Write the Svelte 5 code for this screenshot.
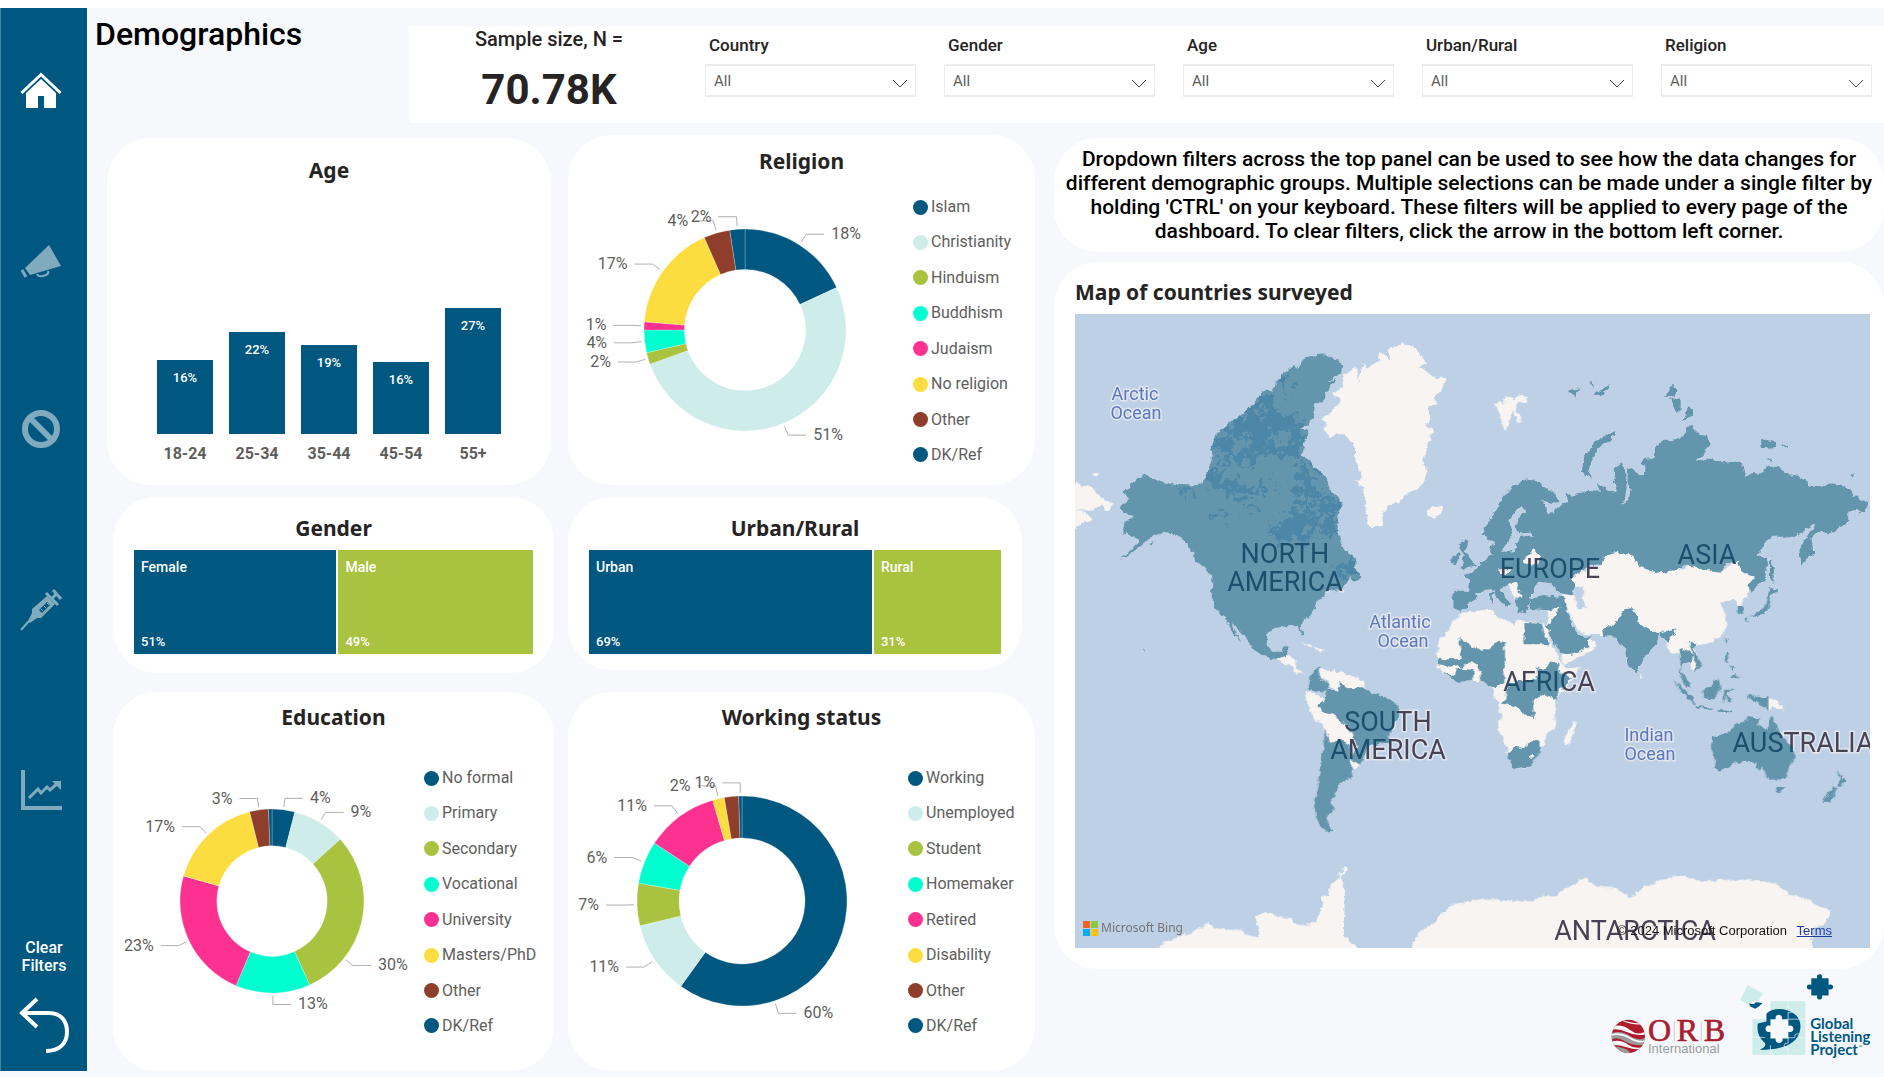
<script lang="ts">
	type Slice = { name: string; share: number; color: string; label?: string; labelAt?: number };

	const palette = ['#00577f', '#cdecea', '#a9c23f', '#00ffcf', '#fd3190', '#fcdd3f', '#8e3e2b', '#00577f'];

	const filters = [
		{ id: 'country', label: 'Country', options: ['All'] },
		{ id: 'gender', label: 'Gender', options: ['All', 'Female', 'Male'] },
		{ id: 'age', label: 'Age', options: ['All', '18-24', '25-34', '35-44', '45-54', '55+'] },
		{ id: 'area', label: 'Urban/Rural', options: ['All', 'Urban', 'Rural'] },
		{ id: 'religion', label: 'Religion', options: ['All', 'Islam', 'Christianity', 'Hinduism', 'Buddhism'] }
	];

	const ages = [
		{ name: '18-24', share: 15.9, label: '16%' },
		{ name: '25-34', share: 21.9, label: '22%' },
		{ name: '35-44', share: 19, label: '19%' },
		{ name: '45-54', share: 15.5, label: '16%' },
		{ name: '55+', share: 27, label: '27%' }
	];

	// labelAt moves a label off the middle of its slice, clear of the legend
	function toSlices(rows: Array<[string, number, string?, number?]>): Slice[] {
		return rows.map(([name, share, label, labelAt], i) => ({ name, share, label, labelAt, color: palette[i] }));
	}

	const religion = toSlices([
		['Islam', 18.1, '18%'],
		['Christianity', 51.4, '51%'],
		['Hinduism', 1.9, '2%'],
		['Buddhism', 3.6, '4%'],
		['Judaism', 1.3, '1%'],
		['No religion', 17.1, '17%'],
		['Other', 4.2, '4%'],
		['DK/Ref', 2.4, '2%']
	]);

	const education = toSlices([
		['No formal', 4, '4%'],
		['Primary', 9.3, '9%'],
		['Secondary', 30, '30%', 35.7],
		['Vocational', 13.1, '13%'],
		['University', 23, '23%'],
		['Masters/PhD', 16.7, '17%'],
		['Other', 3.3, '3%'],
		['DK/Ref', 0.6]
	]);

	const working = toSlices([
		['Working', 59.9, '60%', 45],
		['Unemployed', 11.3, '11%'],
		['Student', 6.5, '7%'],
		['Homemaker', 6.6, '6%'],
		['Retired', 11.2, '11%'],
		['Disability', 1.8, '2%'],
		['Other', 2.2],
		['DK/Ref', 0.5, '1%']
	]);

	function buildArcs(slices: Slice[], cx: number, cy: number, r: number) {
		const point = (share: number, radius: number) => {
			const a = (share / 100) * Math.PI * 2;
			return [cx + Math.sin(a) * radius, cy - Math.cos(a) * radius];
		};
		const inner = r * 0.6;
		let start = 0;
		return slices.map((slice) => {
			const end = start + slice.share;
			const mid = slice.labelAt ?? (start + end) / 2;
			const large = slice.share > 50 ? 1 : 0;
			const d = `M${point(start, r)}A${r} ${r} 0 ${large} 1 ${point(end, r)}L${point(end, inner)}A${inner} ${inner} 0 ${large} 0 ${point(start, inner)}Z`;
			const elbow = point(mid, r * 1.125);
			const side = mid < 50 ? 1 : -1;
			start = end;
			return {
				...slice,
				d,
				leader: `M${point(mid, r * 1.03)}L${elbow}h${side * 18}`,
				x: elbow[0] + side * 25,
				y: elbow[1] + 5,
				anchor: side > 0 ? 'start' : 'end'
			};
		});
	}

	// Each region keeps its own origin; three units to one pixel of the map.
	const regions = [
		{
			transform: 'translate(-45 -42)',
			land: [
				'M1030 132L1060 140 1085 165 1100 190 1080 200 1095 210 1125 235 1160 232 1150 260 1130 280 1125 310 1105 320 1110 360 1098 375 1120 390 1105 440 1090 480 1100 520 1085 560 1035 585 1015 610 980 620 970 640 965 680 930 682 918 650 915 600 905 530 885 470 885 440 862 415 830 400 810 415 790 385 800 370 782 355 820 335 840 300 815 280 850 260 845 230 890 200 898 245 908 190 922 205 960 180 955 155 990 175 985 145Z',
				'M1100 632L1120 618 1148 622 1140 640 1122 652 1102 645Z',
				'M45 548L95 560 130 600 158 612 145 632 120 618 95 632 45 630 20 600Z',
				'M45 632L75 635 95 660 65 672 45 688 20 660Z',
				'M95 522l18-4-3 12z',
				'M892 540l18-5-2 24-14-4z',
				'M728 1028l30 12-6 6zM760 1040l34 10-14 6z'
			],
			surveyed: [
				'M250 524L292 541 350 555 395 556 428 549 440 520 455 480 453 450 465 408 490 383 500 378 540 342 550 345 617 266 640 275 645 245 668 225 700 195 712 208 722 190 735 172 770 165 795 163 830 178 850 200 840 218 805 245 830 238 800 275 790 300 765 315 762 345 745 375 722 385 745 390 740 420 728 430 735 440 725 470 750 478 760 500 800 530 810 570 848 607 835 650 832 700 850 745 885 775 888 810 905 835 880 842 870 830 850 865 800 875 790 895 770 905 760 935 725 968 722 975 732 1010 722 1000 715 975 690 978 640 985 622 1000 620 1035 635 1055 665 1055 670 1040 690 1038 680 1065 650 1078 610 1068 575 1045 568 1030 530 985 512 962 525 990 545 1025 520 1000 498 955 475 935 455 895 457 830 435 805 405 780 400 760 370 715 345 700 315 697 280 708 262 722 235 745 205 765 175 778 205 755 240 725 235 718 190 700 190 675 205 655 222 655 190 635 180 620 210 600 190 575 210 565 215 545Z',
				'M1205 718L1222 725 1215 755 1235 780 1245 795 1210 808 1200 805 1215 790 1205 775 1212 765 1198 745Z',
				'M1178 770L1195 755 1198 780 1185 795 1172 792Z',
				'M265 730l12-8-5 14z',
				'M248 1040l10 8-3 6z'
			],
			lakes: [
				'M617 266L640 290 635 330 660 350 700 340 725 385 725 430 720 480 680 475 650 460 600 470 540 490 500 470 490 455 455 460 465 408 500 378 550 345Z',
				'M650 725L640 700 650 670 690 650 690 620 720 645 720 600 700 560 720 530 725 480 760 530 770 590 800 580 848 607 835 640 832 700 800 710 780 680 745 670 745 725Z',
				'M440 520L455 500 490 480 500 500 470 530 540 560 630 560 640 580 520 585 450 560 430 549Z',
				'M365 558l30 0-5 40zM740 500l30 20 0 60-20-30zM820 800l70-30 20 60-50 10z',
				'M600 480l30 60 15 0-10-60zM450 620l40 10 5 25-25-15zM560 590l20 30-10 30zM660 250l20 30 10-10-15-40z'
			],
			islets: [
				'M500 400l40 20 25-15 0 40-45 5zM640 400l50-10-10 40-60 10zM580 340l30-20 10 30zM600 470l60 0 20 60-60 10z',
				'M665 470l12 0 2 50-14-10zM690 470l30 10-5 30-20 0z',
				'M735 600l20-10 10 40-30 10zM770 620l30 5-10 40-20-10z'
			]
		},
		{
			transform: 'translate(1155 -42)',
			land: [
				'M335 835L355 820 425 795 430 770 475 755 520 770 545 800 590 818 650 810 690 800 785 815 830 780 845 820 885 830 865 880 845 905 850 925 835 915 825 900 780 905 795 940 800 980 790 1000 760 1025 720 1035 700 1035 715 1075 718 1100 700 1112 690 1100 685 1050 640 1065 625 1040 600 1000 430 1005 400 1005 365 1000 345 975 330 940 320 925 305 880 345 890 350 925 380 925 368 890 372 858 345 860Z',
				'M385 1015L408 1025 400 1050 350 1075 310 1095 305 1068 350 1060 390 1040Z',
				'M265 930L300 922 285 950 262 985Z',
				'M185 790L200 770 220 748 240 770 235 795Z',
				'M145 855L168 848 182 890 165 895Z',
				'M115 808l40 0-10 14-28 0zM210 835l12 15-8 4z',
				'M105 310L120 302 128 312 140 290 160 298 178 286 205 292 200 312 172 308 165 325 180 350 185 370 170 365 160 330 150 345 140 395 125 365 118 335Z'
			],
			surveyed: [
				'M200 535L225 540 250 560 290 585 295 605 275 612 245 600 265 625 262 640 280 640 290 625 305 612 325 605 315 575 335 590 350 582 380 572 420 575 410 550 465 578 470 570 458 545 465 505 485 490 495 510 500 560 495 600 480 612 505 600 512 570 502 540 505 500 525 518 545 530 560 510 545 490 550 478 585 472 585 445 610 425 670 412 680 380 700 378 705 400 745 405 752 430 735 455 710 485 760 475 785 490 820 485 845 485 855 530 880 520 910 520 920 500 950 500 990 525 1035 535 1045 555 1095 560 1115 550 1160 560 1200 600 1225 605 1218 640 1190 630 1165 635 1165 665 1110 700 1075 695 1055 715 1060 760 1025 800 1018 750 1045 705 1070 668 1040 685 1005 710 935 710 890 765 925 775 920 810 905 850 870 875 865 855 885 830 845 820 830 785 800 790 785 815 740 810 690 800 670 795 650 810 590 818 540 800 520 770 475 755 430 770 425 795 380 800 355 820 335 835 345 860 335 885 305 880 280 860 275 850 235 845 220 875 210 890 205 925 195 940 175 935 165 905 182 890 168 848 145 855 120 865 130 885 155 910 135 920 100 880 95 868 70 870 45 878 50 895 30 905 20 925 0 932-20 925-20 872 28 872 30 840 10 825 40 815 60 790 80 775 95 765 88 745 105 730 85 722 70 690 90 660 130 590 160 560ZM185 622L168 635 148 665 155 700 145 720 125 758 165 752 172 725 185 710 218 705 215 698 178 700 168 680 172 655 195 635ZM185 790L235 795 240 770 220 748 200 770ZM115 808l40 0-10 14-28 0z',
				'M208 895L250 885 315 892 320 920 270 928 210 925Z',
				'M300 925L315 918 330 950 340 980 365 1010 390 1010 385 1040 350 1060 312 1068 290 1040 258 980 280 955Z',
				'M425 985L455 980 480 950 490 928 515 925 530 945 540 975 595 1000 595 1030 545 1080 540 1100 527 1123 505 1090 495 1040 475 1030 470 1010 430 1008Z',
				'M595 1000L648 985 640 1005 622 1028 605 1010Z',
				'M465 393L470 405 420 440 395 480 385 515 398 538 365 515 372 475 400 430Z',
				'M640 248L652 275 640 292 615 290Z',
				'M630 300L662 295 662 335 645 330Z',
				'M685 318L700 345 665 362Z',
				'M322 275l35-12-10 25zM400 285l25-15 20-18 3 12-20 18-25 8zM385 245l10-2 5 22z',
				'M903 418L950 425 945 445 905 448ZM960 432l25 8-3 8zM922 478l14-6 5 10z',
				'M1168 522l18 2-8 8z',
				'M930 768L942 810 940 855 930 830Z',
				'M930 862l24 10-18 12-10-4z',
				'M90 880l8-2 0 28-7 2z'
			],
			lakes: [],
			islets: []
		},
		{
			transform: 'translate(555 858)',
			land: [
				'M597 40L700 27 705 45 765 75 768 60 855 68 870 120 905 190 920 205 960 205 935 240 900 280 885 300 888 380 858 400 858 430 840 445 820 480 800 500 760 508 745 470 730 420 712 385 722 350 715 310 700 285 695 255 665 240 640 240 590 245 550 220 535 205 530 175 540 120 590 55Z',
				'M945 362L950 375 930 435 915 430 915 405Z',
				'M135 275L165 280 200 300 180 335 225 345 270 390 290 440 270 435 210 425 198 388 160 350 140 310Z',
				'M180 205L240 215 310 240 312 262 265 265 220 270 205 245 180 230Z',
				'M272 478l28 15-10 15-20-3Z',
				'M55 180L72 160 110 180 105 200 128 222 112 220 92 200Z'
			],
			surveyed: [
				'M597 113L660 150 685 148 712 125 735 130 735 175 730 220 730 250 697 262 665 242 655 200 635 180 605 205 590 195 570 200 535 195 530 172 550 178 605 177Z',
				'M552 215L585 225 590 205 640 210 640 240 590 247Z',
				'M793 66L845 68 850 90 867 133 793 133Z',
				'M745 255L780 240 800 245 835 225 830 200 850 210 870 185 895 190 900 215 935 235 895 275 890 300 850 285 820 295 825 355 800 350 770 320 720 310 735 300Z',
				'M742 465L765 440 790 445 820 420 838 425 840 455 815 495 760 508ZM808 470l8-6 8 6-8 8z',
				'M185 198L175 210 180 235 210 255 200 275 185 280 140 268 152 225 165 205Z',
				'M200 270L235 270 240 250 265 265 310 262 325 275 380 292 415 315 415 340 390 400 385 425 325 440 300 495 270 475 292 440 268 390 225 345 180 335 175 315 195 300Z',
				'M195 390L210 425 245 420 270 435 275 510 278 530 245 545 230 575 212 605 220 625 205 650 205 680 222 692 200 695 170 660 162 620 175 560 185 480 192 420Z'
			],
			lakes: [],
			islets: []
		},
		{
			transform: 'translate(1455 828)',
			land: ['M625 325L650 330 672 362 640 350 626 362Z', 'M243 250l6 10-5 4z'],
			surveyed: [
				'M355 180L375 178 400 195 395 215 370 220 360 240 385 270 395 298 375 285 358 250 362 205Z',
				'M385 160L412 158 400 180 425 215 420 235 400 250 412 225 395 185Z',
				'M338 270L370 295 400 320 405 342 380 325Z',
				'M402 345L458 355 455 361 405 352ZM470 360l50 2-2 5-45-2z',
				'M425 298L450 290 475 262 482 290 465 328 430 325Z',
				'M488 300L525 298 500 308 514 335 504 340 498 318 492 340Z',
				'M562 310L590 320 625 318 625 362 600 345 575 330Z',
				'M495 190L506 186 508 215 500 220ZM508 225l18 8-4 12zM510 262l20-14 2 22z',
				'M495 145l8-2-4 18z',
				'M625 0L650 3 632 15 630 50 610 72 565 80 562 95 554 85 600 65 620 40Z',
				'M535 45L550 45 552 70 533 76Z',
				'M567 382L598 385 590 405 625 420 633 375 645 400 660 430 680 450 702 480 704 505 685 545 680 565 655 572 620 565 608 530 598 540 590 520 560 515 525 520 500 532 475 542 462 535 465 510 452 470 455 445 500 430 530 400 550 395Z',
				'M648 588l22 0-5 20-10 2z',
				'M827 538L845 560 860 565 845 590 835 590 842 570Z',
				'M825 588L832 595 810 635 788 636 795 620Z'
			],
			lakes: [],
			islets: []
		},
		{
			transform: 'translate(-45 978) scale(1.577 1)',
			land: [
				'M175 950L200 905 230 890 255 875 280 852 300 862 345 870 360 890 380 890 372 830 390 817 435 835 465 860 485 845 500 800 498 765 512 770 515 735 535 708 542 750 540 885 585 950Z',
				'M528 705l18-26 4 4-14 26z',
				'M660 950L685 870 710 850 740 800 790 778 900 784 920 765 945 772 960 745 1000 712 1020 740 1060 745 1085 775 1110 740 1140 722 1175 706 1230 724 1310 715 1360 730 1390 765 1420 775 1465 815 1455 850 1430 870 1433 950Z'
			],
			surveyed: [],
			lakes: [],
			islets: []
		}
	];

	const continents = [
		{ text: 'NORTH', x: 210, y: 249 },
		{ text: 'AMERICA', x: 210, y: 277 },
		{ text: 'SOUTH', x: 313, y: 417 },
		{ text: 'AMERICA', x: 313, y: 445 },
		{ text: 'EUROPE', x: 475, y: 264 },
		{ text: 'ASIA', x: 632, y: 250 },
		{ text: 'AFRICA', x: 474, y: 377 },
		{ text: 'AUSTRALIA', x: 728, y: 438 },
		{ text: 'ANTARCTICA', x: 560, y: 626 }
	];

	const oceans = [
		{ text: 'Arctic', x: 60, y: 86 },
		{ text: 'Ocean', x: 61, y: 105 },
		{ text: 'Atlantic', x: 325, y: 314 },
		{ text: 'Ocean', x: 328, y: 333 },
		{ text: 'Indian', x: 574, y: 427 },
		{ text: 'Ocean', x: 575, y: 446 }
	];
</script>

{#snippet donut(title: string, slices: Slice[], width: number, cx: number, cy: number, r: number)}
	<svg class="donut" {width} height="300" viewBox="0 0 {width} 300" role="img" aria-label={title}>
		{#each buildArcs(slices, cx, cy, r) as arc}
			<path d={arc.d} fill={arc.color} class="arc" />
			{#if arc.label}
				<path d={arc.leader} class="leader" />
				<text x={arc.x} y={arc.y} text-anchor={arc.anchor}>{arc.label}</text>
			{/if}
		{/each}
	</svg>
	<ul class="legend">
		{#each slices as slice}
			<li><span class="dot" style="background: {slice.color}"></span>{slice.name}</li>
		{/each}
	</ul>
{/snippet}

<div class="page">
	<nav class="sidebar" aria-label="Pages">
		<div class="pages">
			<a href="#home" class="current" aria-label="Home">
				<svg width="42" height="36" viewBox="0 0 42 36">
					<path d="M1.500 21 21 2.500 40.500 21" fill="none" stroke="currentColor" stroke-width="3" />
					<path d="M21 7 36 21V36H24V24H18V36H6V21Z" fill="currentColor" />
				</svg>
			</a>
			<a href="#voices" aria-label="Voices">
				<svg width="40" height="33" viewBox="0 0 40 33">
					<path d="M28 0 40 21 9 30 4 23Z" fill="currentColor" />
					<path d="M1 25 5 32" fill="none" stroke="currentColor" stroke-width="3" />
					<path d="M16 29q1 3 6 2l3-1q3-1 2-4" fill="none" stroke="currentColor" stroke-width="2" />
				</svg>
			</a>
			<a href="#barriers" aria-label="Barriers">
				<svg width="38" height="38" viewBox="0 0 38 38" fill="none" stroke="currentColor">
					<circle cx="19" cy="19" r="16" stroke-width="6" />
					<path d="M8 8 30 30" stroke-width="6" />
				</svg>
			</a>
			<a href="#vaccines" aria-label="Vaccines">
				<svg width="42" height="42" viewBox="0 0 42 42">
					<path d="M1 41 9 32" stroke="currentColor" stroke-width="2" />
					<path d="M8 32 12 24 12 20 27 7 35 15 21 29 17 29 10 34Z" fill="currentColor" />
					<path d="M26 4 38 16M31 11 36 5M33 1 41 10" stroke="currentColor" stroke-width="3" />
					<path d="M19 21 27 13 30 16 22 24Z" fill="#00577f" />
					<path d="M21 20l2 2M24 17l2 2M27 14l2 2" stroke="currentColor" stroke-width="1" />
				</svg>
			</a>
			<a href="#trends" aria-label="Trends">
				<svg width="41" height="40" viewBox="0 0 41 40" fill="none" stroke="currentColor">
					<path d="M2 0V38H41" stroke-width="4" />
					<path d="M8 28 17 19 20 23 26 17 29 20 37 13" stroke-width="3" />
					<path d="M31 11H40V20Z" fill="currentColor" stroke="none" />
				</svg>
			</a>
		</div>
		<button type="button" class="clear">
			<span>Clear<br />Filters</span>
			<svg width="50" height="56" viewBox="0 0 50 56" fill="none" stroke="#fff" stroke-width="4">
				<path d="M18 2 3 16 18 30" />
				<path d="M3 16H30C42 16 48 24 48 35S41 54 27 54" />
			</svg>
		</button>
	</nav>

	<main>
		<header>
			<h1>Demographics</h1>
			<div class="panel">
				<div class="kpi">
					<span class="kpi-label">Sample size, N =</span>
					<strong>70.78K</strong>
				</div>
				{#each filters as filter}
					<div class="filter">
						<label for={filter.id}>{filter.label}</label>
						<div class="select-box">
							<select id={filter.id}>
								{#each filter.options as option}
									<option>{option}</option>
								{/each}
							</select>
							<svg width="16" height="10" viewBox="0 0 16 10">
								<path d="M1 1 8 8 15 1" fill="none" stroke="#444" />
							</svg>
						</div>
					</div>
				{/each}
			</div>
		</header>

		<div class="columns">
			<div class="column first">
				<section class="card age">
					<h2>Age</h2>
					<div class="bars">
						{#each ages as age}
							<div class="bar-group">
								<div class="bar" style="height: {Math.round(age.share * 4.66)}px">{age.label}</div>
								<span>{age.name}</span>
							</div>
						{/each}
					</div>
				</section>
				<section class="card split">
					<h2>Gender</h2>
					<div class="treemap">
						<div class="tile blue" style="flex-basis: 51%"><span>Female</span><span class="share">51%</span></div>
						<div class="tile green" style="flex-basis: 49%"><span>Male</span><span class="share">49%</span></div>
					</div>
				</section>
				<section class="card tall">
					<h2>Education</h2>
					<div class="chart">{@render donut('Education', education, 311, 159, 169, 92)}</div>
				</section>
			</div>

			<div class="column second">
				<section class="card religion">
					<h2>Religion</h2>
					<div class="chart">{@render donut('Religion', religion, 345, 177, 154, 101)}</div>
				</section>
				<section class="card split area">
					<h2>Urban/Rural</h2>
					<div class="treemap">
						<div class="tile blue" style="flex-basis: 69%"><span>Urban</span><span class="share">69%</span></div>
						<div class="tile green" style="flex-basis: 31%"><span>Rural</span><span class="share">31%</span></div>
					</div>
				</section>
				<section class="card tall">
					<h2>Working status</h2>
					<div class="chart">{@render donut('Working status', working, 340, 174, 169, 105)}</div>
				</section>
			</div>

			<div class="column third">
				<p class="card note">
					Dropdown filters across the top panel can be used to see how the data changes for<br />
					different demographic groups. Multiple selections can be made under a single filter by<br />
					holding 'CTRL' on your keyboard. These filters will be applied to every page of the<br />
					dashboard. To clear filters, click the arrow in the bottom left corner.
				</p>
				<section class="card map-card">
					<h2>Map of countries surveyed</h2>
					<div class="map">
						<svg viewBox="0 0 795 634" role="img" aria-label="World map with the surveyed countries shaded">
							<filter id="coast" filterUnits="userSpaceOnUse" x="-10" y="-10" width="815" height="654" color-interpolation-filters="sRGB">
								<feTurbulence type="fractalNoise" baseFrequency="0.16" numOctaves="3" seed="4" result="noise" />
								<feDisplacementMap in="SourceGraphic" in2="noise" scale="6" xChannelSelector="R" yChannelSelector="G" />
							</filter>
							<filter id="shore" filterUnits="userSpaceOnUse" x="-10" y="-10" width="815" height="654" color-interpolation-filters="sRGB">
								<feTurbulence type="fractalNoise" baseFrequency="0.12" numOctaves="3" seed="9" result="noise" />
								<feDisplacementMap in="SourceGraphic" in2="noise" scale="36" xChannelSelector="R" yChannelSelector="G" />
							</filter>
							<rect width="795" height="634" class="sea" />
							<g filter="url(#coast)">
								<g transform="scale(0.33333)">
									{#each regions as region}
										<g transform={region.transform}>
											{#each [...region.land, ...region.surveyed] as d}<path {d} class="land" />{/each}
										</g>
									{/each}
								</g>
							</g>
							<g filter="url(#shore)">
								<g transform="scale(0.33333)">
									{#each regions as region}
										<g transform={region.transform}>
											{#each region.lakes as d}<path {d} class="sea" />{/each}
											{#each region.islets as d}<path {d} class="land" />{/each}
										</g>
									{/each}
								</g>
							</g>
							{#each oceans as label}
								<text x={label.x} y={label.y} class="ocean">{label.text}</text>
							{/each}
							{#each continents as label}
								<text x={label.x} y={label.y} class="continent">{label.text}</text>
							{/each}
							<g filter="url(#coast)" opacity="0.6">
								<g transform="scale(0.33333)">
									{#each regions as region}
										<g transform={region.transform}>
											{#each region.surveyed as d}<path {d} class="surveyed" />{/each}
										</g>
									{/each}
								</g>
							</g>
						</svg>
						<div class="bing">
							<svg width="15" height="15" viewBox="0 0 15 15">
								<path d="M0 0h7v7H0z" fill="#f26522" />
								<path d="M8 0h7v7H8z" fill="#8dc63f" />
								<path d="M0 8h7v7H0z" fill="#00aeef" />
								<path d="M8 8h7v7H8z" fill="#ffc20e" />
							</svg>
							Microsoft Bing
						</div>
						<div class="credit">© 2024 Microsoft Corporation <a href="#terms">Terms</a></div>
					</div>
				</section>
				<footer>
					<svg width="117" height="45" viewBox="90 165 351 135" role="img" aria-label="ORB International">
						<clipPath id="globe"><circle cx="145" cy="229" r="50" /></clipPath>
						<g clip-path="url(#globe)">
							<rect x="90" y="175" width="110" height="110" fill="#b01a2b" />
							<path d="M90 200Q125 190 150 210T200 212L200 222Q170 230 142 217T90 210Z" fill="#f6f8fc" />
							<path d="M90 222Q120 208 150 228T200 228L200 252Q165 262 135 244T90 244Z" fill="#9b9c9e" />
							<path d="M90 226Q120 216 150 234T200 240" fill="none" stroke="#f6f8fc" stroke-width="5" />
							<path d="M90 246Q120 236 145 254T200 256L200 264Q170 272 140 262T90 256Z" fill="#f6f8fc" />
							<path d="M90 260Q125 258 150 275L135 290Z" fill="#9b9c9e" />
							<path d="M125 180Q160 196 195 190" fill="none" stroke="#f6f8fc" stroke-width="4" />
						</g>
						<path d="M283 185V243M364 185V243" stroke="#b9babc" stroke-width="2" />
						<g class="orb">
							<text x="204" y="242">O</text>
							<text x="290" y="242">R</text>
							<text x="371" y="242">B</text>
						</g>
						<text x="204" y="280" class="orb-sub">International</text>
					</svg>
					<svg width="135" height="88" viewBox="475 35 405 265" role="img" aria-label="Global Listening Project">
						<g fill="#cdecea">
							<path d="M572 123H677V285H518V177H572Z" />
							<path d="M503 75 549 99 533 126 518 122 508 134 480 119Z" />
						</g>
						<path d="M508 128q12 8 20-2l20 2-10 10-12 8-16-8z" fill="#00577f" />
						<path d="M560 160C575 146 600 143 622 150 655 160 668 185 660 215 650 250 615 268 540 270 556 262 560 254 554 247 538 235 530 215 534 190L560 184Z" fill="#00577f" />
						<path d="M572 177h16c-6-18 24-18 18 0h20v20c20-7 20 25 0 18v20h-18c6 18-26 18-20 0h-16v-20c-20 7-20-25 0-18z" fill="#f6f8fc" />
						<path d="M625 123v20q12-2 12 8t-12 6v20h52M518 232h38M572 285v-30M625 285v-20q-12 2-12-8t12-8v-16h20q-2-12 8-12t6 12h18" fill="none" stroke="#f6f8fc" stroke-width="2" />
						<path d="M695 54h18c-6-16 20-16 14 0h20v20c18-7 18 19 0 13v19h-20c6 16-20 16-14 0h-18v-19c-18 6-18-20 0-13z" fill="#00577f" />
						<g class="glp">
							<text x="692" y="208">Global</text>
							<text x="692" y="246">Listening</text>
							<text x="692" y="284">Project</text>
						</g>
						<path d="M838 258h12" stroke="#00577f" stroke-width="2" />
					</svg>
				</footer>
			</div>
		</div>
	</main>
</div>

<style>
	:global(body) {
		margin: 0;
		background: #fff;
		font-family: Roboto, 'Liberation Sans', sans-serif;
		color: #252423;
	}

	.page {
		display: flex;
		margin-top: 8px;
		padding-bottom: 6px;
		background: #f6f8fc;
	}

	.sidebar {
		display: flex;
		flex: 0 0 87px;
		flex-direction: column;
		align-items: center;
		box-sizing: border-box;
		padding-bottom: 18px;
		border-left: 1px solid #4585a2;
		background: #00577f;
	}

	.pages {
		display: grid;
		grid-template-rows: 164px 178px 158px 204px 156px;
		place-items: center;
		padding-right: 6px;
	}

	.pages a {
		display: block;
		color: #80abbf;
	}

	.pages a.current {
		color: #fff;
	}

	.pages svg,
	.clear svg {
		display: block;
	}

	.clear {
		display: flex;
		flex-direction: column;
		align-items: center;
		gap: 22px;
		margin-top: 71px;
		padding: 0;
		border: 0;
		background: none;
		color: #fff;
		font: 500 16px/18px Roboto, sans-serif;
		cursor: pointer;
	}

	main {
		flex: 1;
		min-width: 0;
	}

	header {
		display: flex;
		justify-content: space-between;
	}

	h1 {
		margin: 0;
		padding: 6px 0 0 8px;
		color: #000;
		font-size: 32px;
		font-weight: 500;
		line-height: 40px;
	}

	.panel {
		display: flex;
		flex: 0 1 1475px;
		height: 97px;
		margin-top: 18px;
		background: #fff;
	}

	.kpi {
		display: flex;
		flex: 0 0 280px;
		flex-direction: column;
		align-items: center;
	}

	.kpi-label {
		font-size: 20px;
		font-weight: 500;
		line-height: 26px;
	}

	.kpi strong {
		margin-top: 12px;
		font-size: 42px;
		font-weight: 700;
		line-height: 52px;
	}

	.filter {
		flex: 1;
		padding: 8px 12px 0 16px;
	}

	.filter label {
		display: block;
		padding-left: 4px;
		font-size: 17px;
		font-weight: 500;
		line-height: 22px;
	}

	.select-box {
		position: relative;
		margin-top: 8px;
	}

	.select-box select {
		width: 100%;
		height: 33px;
		padding: 0 8px;
		border: 1px solid #ececec;
		border-width: 2px 1px;
		border-radius: 0;
		background: #fff;
		color: #605e5c;
		font: 15px Roboto, sans-serif;
		appearance: none;
	}

	.select-box svg {
		position: absolute;
		top: 15px;
		right: 8px;
		pointer-events: none;
	}

	.columns {
		display: flex;
		margin-top: 12px;
		padding-left: 20px;
	}

	.column {
		display: flex;
		flex-direction: column;
	}

	.first {
		flex: 447 1 0;
		margin-right: 14px;
	}

	.second {
		flex: 467 1 0;
		margin-right: 19px;
	}

	.third {
		flex: 830 1 0;
		min-width: 0;
	}

	.card {
		box-sizing: border-box;
		border-radius: 44px;
		background: #fff;
	}

	h2 {
		margin: 0;
		font: 700 21px/30px 'Noto Sans', sans-serif;
		text-align: center;
	}

	.age {
		height: 347px;
		margin: 3px 3px 12px 0;
		padding: 17px 50px 0;
	}

	.bars {
		display: flex;
		align-items: flex-end;
		gap: 16px;
		height: 279px;
	}

	.bar-group {
		flex: 1;
		color: #605e5c;
		font-size: 16px;
		font-weight: 700;
		line-height: 20px;
		text-align: center;
		white-space: nowrap;
	}

	.bar {
		box-sizing: border-box;
		margin-bottom: 10px;
		padding-top: 8px;
		background: #00577f;
		color: #fff;
		font-size: 13px;
		font-weight: 500;
	}

	.split {
		height: 176px;
		padding: 16px 21px 0;
	}

	.first .split,
	.first .tall {
		margin-left: 6px;
	}

	.area {
		height: 173px;
		margin: 0 13px 3px 0;
	}

	.treemap {
		display: flex;
		gap: 2px;
		height: 104px;
		margin-top: 7px;
	}

	.tile {
		display: flex;
		flex-direction: column;
		justify-content: space-between;
		box-sizing: border-box;
		padding: 8px 7px 3px;
		color: #fff;
		font-size: 14px;
		font-weight: 500;
		line-height: 18px;
	}

	.share {
		font-size: 13px;
	}

	.blue {
		background: #00577f;
	}

	.green {
		background: #a9c23f;
	}

	.religion {
		height: 350px;
		margin-bottom: 12px;
		padding-top: 11px;
	}

	.tall {
		height: 379px;
		margin-top: 19px;
		padding-top: 10px;
	}

	.chart {
		display: flex;
	}

	.donut {
		flex: none;
		overflow: visible;
	}

	.donut text {
		fill: #605e5c;
		font-size: 16px;
	}

	.arc {
		stroke: #fff;
		stroke-opacity: 0.25;
	}

	.leader {
		fill: none;
		stroke: #b0b0b0;
	}

	.legend {
		display: flex;
		flex-direction: column;
		justify-content: space-between;
		height: 264px;
		margin: 23px 0 0;
		padding: 0;
		color: #605e5c;
		font-size: 16px;
		line-height: 16px;
		list-style: none;
		white-space: nowrap;
	}

	.tall .legend {
		margin-top: 38px;
	}

	.legend li {
		display: flex;
		align-items: center;
		gap: 3px;
	}

	.dot {
		width: 15px;
		height: 15px;
		border-radius: 50%;
	}

	.note {
		margin: 3px 0 10px;
		padding: 9px 0;
		color: #000;
		font-size: 21px;
		font-weight: 500;
		line-height: 24px;
		text-align: center;
		white-space: nowrap;
	}

	.map-card {
		padding: 15px 14px 21px 21px;
	}

	.map-card h2 {
		text-align: left;
	}

	.map {
		position: relative;
		margin-top: 7px;
	}

	.map > svg {
		display: block;
		width: 100%;
	}

	.sea {
		fill: #bed0e5;
	}

	.land {
		fill: #f7f4f1;
		fill-rule: evenodd;
	}

	.surveyed {
		fill: #00577f;
		fill-rule: evenodd;
	}

	.map text {
		paint-order: stroke;
		stroke: #f7f4f1;
		stroke-opacity: 0.6;
		stroke-width: 3px;
		text-anchor: middle;
	}

	.ocean {
		fill: #5b77c0;
		font-size: 18px;
	}

	.continent {
		fill: #474356;
		font-size: 27px;
	}

	.bing {
		position: absolute;
		bottom: 12px;
		left: 8px;
		display: flex;
		align-items: center;
		gap: 3px;
		color: #737373;
		font: 12px/16px 'Noto Sans', sans-serif;
	}

	.credit {
		position: absolute;
		right: 38px;
		bottom: 9px;
		color: #111;
		font: 13px/16px 'Liberation Sans', sans-serif;
	}

	.credit a {
		margin-left: 6px;
		color: #1f3f9a;
	}

	footer {
		display: flex;
		justify-content: flex-end;
		align-items: flex-end;
		gap: 11px;
		padding: 3px 11px 11px 0;
	}

	footer svg {
		overflow: visible;
	}

	.orb {
		fill: #a91e30;
		stroke: #a91e30;
		stroke-width: 2px;
		font: 96px 'Liberation Serif', serif;
	}

	.orb-sub {
		fill: #9b9c9e;
		font: 39px 'Liberation Sans', sans-serif;
	}

	.glp {
		fill: #00577f;
		font: 700 45px Lato, sans-serif;
	}
</style>
